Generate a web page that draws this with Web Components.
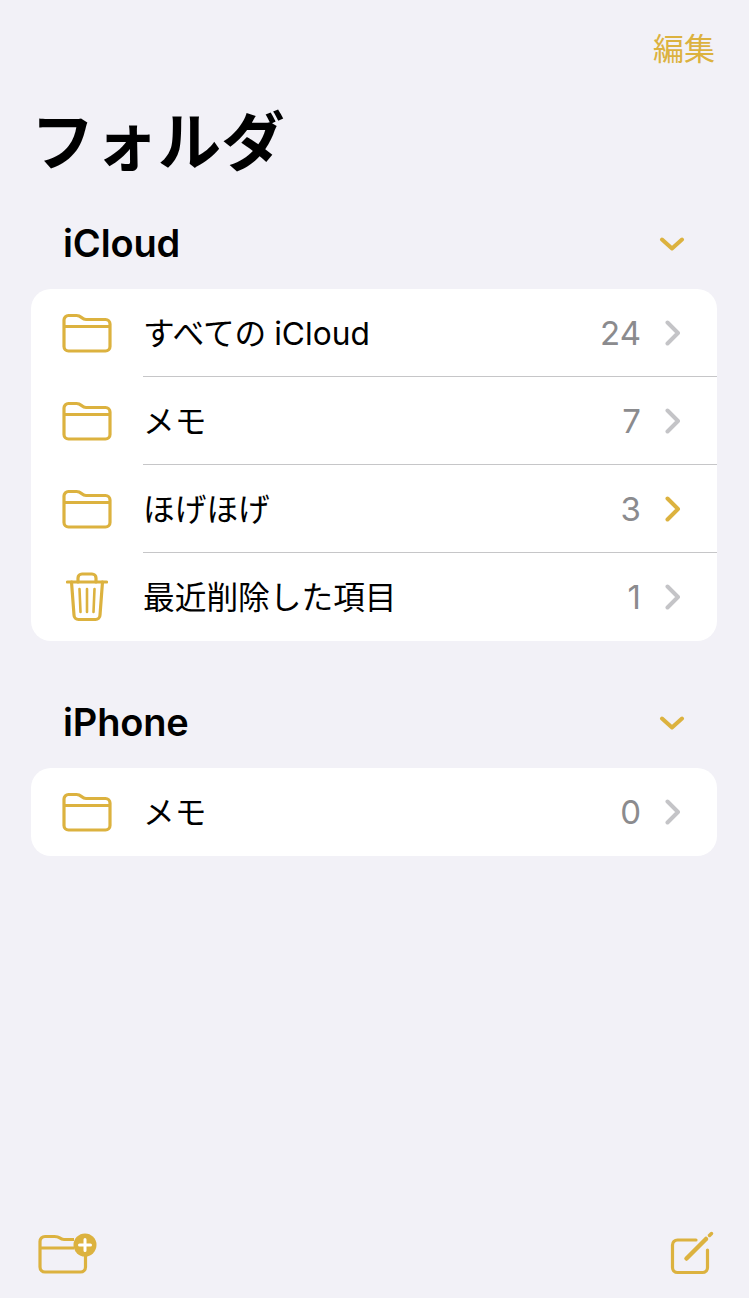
<!DOCTYPE html>
<html lang="ja">
<head>
<meta charset="utf-8">
<title>フォルダ</title>
<style>
  html, body { margin: 0; padding: 0; background: #f2f1f7; }
  body { font-family: Inter, "Noto Sans CJK JP", sans-serif; color: #000; }
</style>
</head>
<body>
<notes-folders>
  <folder-section name="iCloud">
    <folder-row label="すべての iCloud" count="24"></folder-row>
    <folder-row label="メモ" count="7"></folder-row>
    <folder-row label="ほげほげ" count="3" active></folder-row>
    <folder-row label="最近削除した項目" count="1" icon="trash" last></folder-row>
  </folder-section>
  <folder-section name="iPhone">
    <folder-row label="メモ" count="0" last></folder-row>
  </folder-section>
</notes-folders>

<script>
const GOLD = '#dcb23f';

const ICONS = {
  folder: `
    <svg width="50" height="40" viewBox="0 0 50 40" fill="none" stroke="${GOLD}" stroke-width="3.200" stroke-linejoin="round">
      <path d="M2 13.500V7A4.500 4.500 0 0 1 6.500 2.500H14.500C17 2.500 18 3.200 19.500 4.500C21 5.800 22 6.500 24 6.500H43.500A4.500 4.500 0 0 1 48 11V33.500A4.500 4.500 0 0 1 43.500 38H6.500A4.500 4.500 0 0 1 2 33.500Z"/>
      <path d="M2 13.500H48"/>
    </svg>`,
  trash: `
    <svg width="42" height="50" viewBox="0 0 42 50" fill="none" stroke="${GOLD}" stroke-width="3.200" stroke-linecap="round" stroke-linejoin="round">
      <path d="M1.500 10H40.500"/>
      <path d="M12 10V6A4 4 0 0 1 16 2H26A4 4 0 0 1 30 6V10" />
      <path d="M5.500 10L8 43A4.500 4.500 0 0 0 12.500 47.500H29.500A4.500 4.500 0 0 0 34 43L36.500 10"/>
      <path d="M13.500 17L14.500 40M21 17V40M28.500 17L27.500 40" stroke-width="2.600"/>
    </svg>`
};

const sectionTemplate = document.createElement('template');
sectionTemplate.innerHTML = /* html */ `
  <style>
    :host {
      display: block;
    }
    .head {
      display: flex;
      align-items: center;
      justify-content: space-between;
      height: 50px;
      padding: 0 32px;
      margin-bottom: 21px;
    }
    .name {
      font-size: 38px;
      font-weight: 600;
      letter-spacing: -0.15px;
    }
    .card {
      background: #fff;
      border-radius: 20px;
      overflow: hidden;
    }
    svg {
      display: block;
    }
  </style>
  <div class="head">
    <span class="name"></span>
    <svg width="26" height="16" viewBox="0 0 26 16" fill="none" stroke="${GOLD}" stroke-width="4" stroke-linecap="round" stroke-linejoin="round">
      <path d="M3 4.500L13 13.500L23 4.500"/>
    </svg>
  </div>
  <div class="card"><slot></slot></div>
`;

class FolderSection extends HTMLElement {
  constructor() {
    super();
    this.attachShadow({ mode: 'open' });
    this.shadowRoot.appendChild(sectionTemplate.content.cloneNode(true));
  }

  connectedCallback() {
    this.shadowRoot.querySelector('.name').textContent = this.getAttribute('name');
  }
}
customElements.define('folder-section', FolderSection);

const rowTemplate = document.createElement('template');
rowTemplate.innerHTML = /* html */ `
  <style>
    :host {
      display: flex;
      height: 88px;
      box-sizing: border-box;
      align-items: stretch;
    }
    .icon {
      flex: none;
      width: 112px;
      display: flex;
      align-items: center;
      justify-content: center;
      padding-right: 26px;
      padding-left: 26px;
      box-sizing: border-box;
    }
    .main {
      flex: 1;
      min-width: 0;
      display: flex;
      align-items: center;
      border-bottom: 1px solid #c6c6c8;
      padding-right: 36px;
    }
    :host([last]) .main {
      border-bottom: none;
    }
    .label {
      flex: 1;
      font-size: 31.700px;
      word-spacing: -1px;
      white-space: nowrap;
      padding-bottom: 4px;
    }
    .count {
      font-size: 33px;
      color: #8b8b8e;
      margin-right: 24px;
    }
    svg {
      display: block;
    }
    .chev {
      stroke: #c4c4c7;
    }
    :host([active]) .chev {
      stroke: ${GOLD};
    }
  </style>
  <div class="icon"></div>
  <div class="main">
    <span class="label"></span>
    <span class="count"></span>
    <svg class="chev" width="16" height="26" viewBox="0 0 16 26" fill="none" stroke-width="4" stroke-linecap="round" stroke-linejoin="round">
      <path d="M2.500 2.500L13 13L2.500 23.500"/>
    </svg>
  </div>
`;

class FolderRow extends HTMLElement {
  constructor() {
    super();
    this.attachShadow({ mode: 'open' });
    this.shadowRoot.appendChild(rowTemplate.content.cloneNode(true));
  }

  connectedCallback() {
    const root = this.shadowRoot;
    root.querySelector('.icon').innerHTML = ICONS[this.getAttribute('icon') || 'folder'];
    root.querySelector('.label').textContent = this.getAttribute('label');
    root.querySelector('.count').textContent = this.getAttribute('count');
  }
}
customElements.define('folder-row', FolderRow);

const appTemplate = document.createElement('template');
appTemplate.innerHTML = /* html */ `
  <style>
    :host {
      display: flex;
      flex-direction: column;
      height: 1298px;
      box-sizing: border-box;
      padding: 0 32px 0 31px;
      background: #f2f1f7;
      overflow: hidden;
    }
    .top {
      display: flex;
      justify-content: flex-end;
      height: 100px;
      padding-top: 28px;
      box-sizing: border-box;
      color: ${GOLD};
      font-size: 31px;
      line-height: 42px;
      margin-right: 2px;
    }
    h1 {
      margin: 0;
      height: 118px;
      font-size: 63.400px;
      line-height: 84px;
      font-weight: 700;
    }
    .sections {
      display: flex;
      flex-direction: column;
      gap: 56px;
    }
    .toolbar {
      margin-top: auto;
      display: flex;
      justify-content: space-between;
      align-items: flex-end;
      padding: 0 3px 23px 7px;
    }
    svg {
      display: block;
    }
  </style>
  <div class="top"><span>編集</span></div>
  <h1>フォルダ</h1>
  <div class="sections"><slot></slot></div>
  <div class="toolbar">
    <svg width="60" height="42" viewBox="0 0 60 42" fill="none" stroke="${GOLD}" stroke-width="3.200" stroke-linejoin="round">
      <path d="M36 6.500H26C24 6.500 23 6 21.500 4.800C20 3.600 19 3.500 16.500 3.500H7A5 5 0 0 0 2 8.500V34A5 5 0 0 0 7 39H42.500A5 5 0 0 0 47.500 34V22"/>
      <path d="M2 15H36"/>
      <circle cx="47" cy="12" r="11.500" fill="${GOLD}" stroke="none"/>
      <path d="M47 6.500V17.500M41.500 12H52.500" stroke="#fff" stroke-width="3" stroke-linecap="round"/>
    </svg>
    <svg width="44" height="44" viewBox="0 0 44 44" fill="none" stroke="${GOLD}" stroke-width="3.200" stroke-linecap="round" stroke-linejoin="round">
      <path d="M26 9H7.500A5 5 0 0 0 2.500 14V36.500A5 5 0 0 0 7.500 41.500H32.500A5 5 0 0 0 37.500 36.500V19"/>
      <path d="M16.500 27.500L36 8" stroke-width="4.500"/>
      <path d="M39.500 4.500L41.500 2.500" stroke-width="3.500"/>
    </svg>
  </div>
`;

class NotesFolders extends HTMLElement {
  constructor() {
    super();
    this.attachShadow({ mode: 'open' });
    this.shadowRoot.appendChild(appTemplate.content.cloneNode(true));
  }
}
customElements.define('notes-folders', NotesFolders);
</script>
</body>
</html>
